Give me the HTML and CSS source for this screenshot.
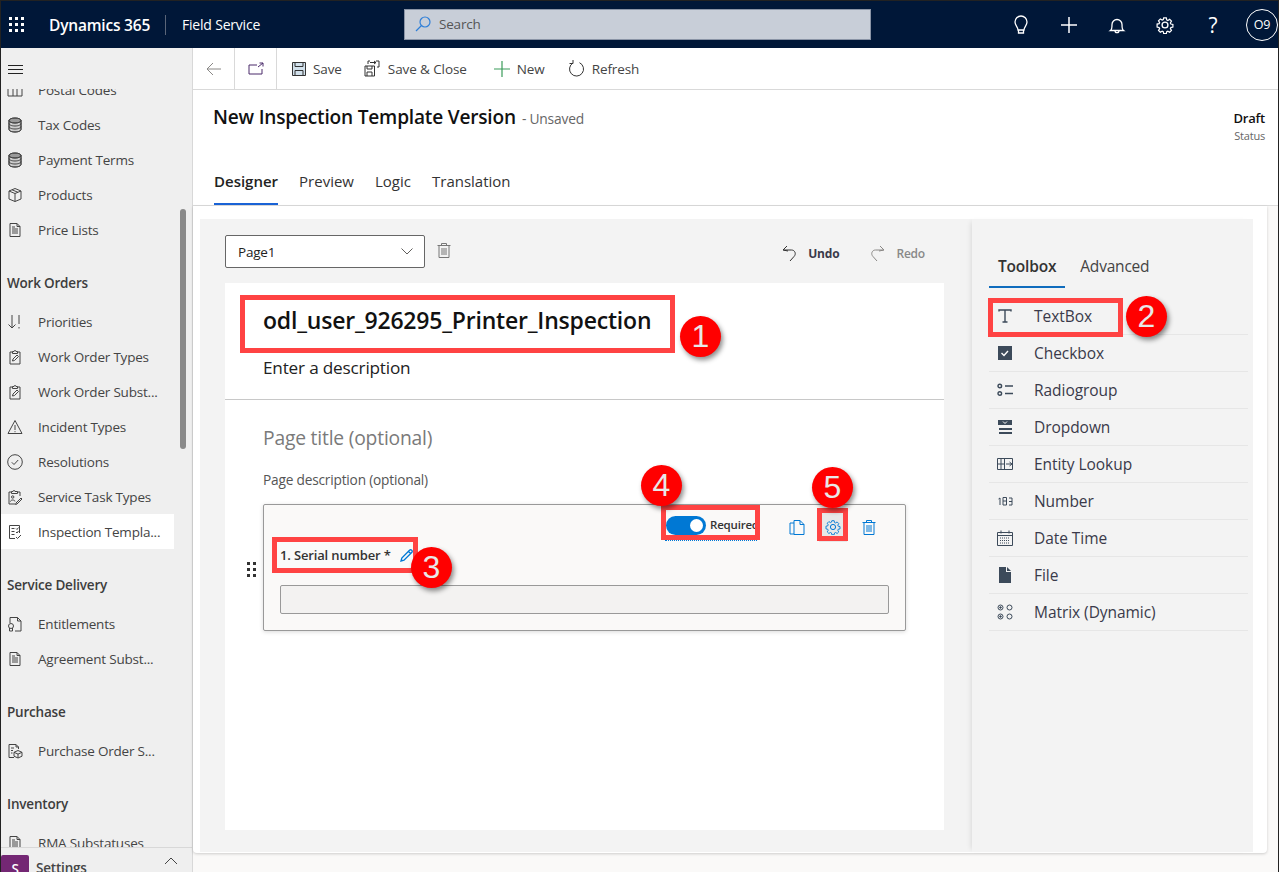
FILE: index.html
```html
<!DOCTYPE html>
<html lang="en">

<head>
    <meta charset="UTF-8">
    <meta name="viewport" content="width=device-width, initial-scale=1.0">
    <title>New Inspection Template Version</title>
    <link rel="stylesheet" href="styles.css">
</head>

<body>
    <svg class="defs" width="0" height="0">
        <symbol id="i-db" viewBox="0 0 16 16"><path d="M2 3.500v9c0 1.400 2.700 2.500 6 2.500s6-1.100 6-2.500v-9z" fill="#ccc"/><ellipse cx="8" cy="3.500" rx="6" ry="2.500" fill="#999"/><path d="M2 3.500v9c0 1.400 2.700 2.500 6 2.500s6-1.100 6-2.500v-9M2 6.500c0 1.400 2.700 2.500 6 2.500s6-1.100 6-2.500M2 9.500c0 1.400 2.700 2.500 6 2.500s6-1.100 6-2.500"/><ellipse cx="8" cy="3.500" rx="6" ry="2.500"/></symbol>
        <symbol id="i-box" viewBox="0 0 16 16"><path d="M8 1.500l6 2.500v8l-6 2.500L2 12V4zM2 4l6 2.500L14 4M8 6.500v8M5 2.800l6 2.500"/></symbol>
        <symbol id="i-doc" viewBox="0 0 16 16"><path d="M3 1.500h7l3 3v10H3zM10 1.500v3h3M5 7h6M5 9h6M5 11h6M5 5h3"/></symbol>
        <symbol id="i-sort" viewBox="0 0 16 16"><path d="M5 1v13M1.500 10.500L5 14l3.500-3.500M12 1v9M12 13v1.500"/></symbol>
        <symbol id="i-clip" viewBox="0 0 16 16"><path d="M5.500 3H3v12h10V3h-2.500M5.500 4.500V2.500h1.500a1 1 0 0 1 2 0h1.500v2zM5.500 12l.5-2 4-4 1.500 1.500-4 4z"/></symbol>
        <symbol id="i-warn" viewBox="0 0 16 16"><path d="M8 1.500L15 14.500H1zM8 6v5M8 12.200v1"/></symbol>
        <symbol id="i-check" viewBox="0 0 16 16"><circle cx="8" cy="8" r="7.300"/><path d="M4.800 8.300l2.200 2.200 4.200-4.500"/></symbol>
        <symbol id="i-task" viewBox="0 0 16 16"><path d="M4.500 3H2v12h6M10.500 3H13v4M4.500 4.500V2.500H6a1 1 0 0 1 2 0h2.500v2zM4.500 8a1.200 1.200 0 1 0 2.400 0a1.200 1.200 0 1 0-2.400 0M3.500 12.500c0-2 4.500-2 4.500 0M9 14l5-5 1 1-5 5-1.500.5z"/></symbol>
        <symbol id="i-insp" viewBox="0 0 16 16"><path d="M12.500 9V1.500h-10v13H8M4.500 4.500h3M4.500 7.500h3M4.500 10.500h3M9 4.500l1 1 1.500-2M9 8l1 1 1.500-2M9 13l1.500 1.500 3.500-3.500"/></symbol>
        <symbol id="i-cert" viewBox="0 0 16 16"><path d="M3 7V1.500h7.500l3.500 3.500v10H8M10.500 1.500V5H14"/><circle cx="4" cy="10" r="2.500"/><path d="M2.500 12v3h3v-3"/></symbol>
        <symbol id="i-order" viewBox="0 0 16 16"><path d="M7 14.500H2v-13h7l2.500 2.500v2M9 1.500V4h2.500M4 5h3M4 7.500h2M4 10h1.500M11 7.500l4 1.800v3.900l-4 1.800-4-1.800V9.300zM7 9.300l4 1.800 4-1.800M11 11v3.900"/></symbol>
        <symbol id="i-trash" viewBox="0 0 16 16"><path d="M1.500 3.500h13M5.500 3.500v-2h5v2M3 3.500v12h10v-12M6 6v7M8 6v7M10 6v7"/></symbol>
        <symbol id="i-gear" viewBox="0 0 16 16"><path d="M6.700 1h2.600l.4 2 1.100.5 1.800-1.100 1.800 1.800-1.100 1.800.5 1.100 2 .4v2.600l-2 .4-.5 1.100 1.100 1.800-1.800 1.800-1.800-1.100-1.100.5-.4 2H6.700l-.4-2-1.100-.5-1.800 1.100-1.800-1.800 1.100-1.800-.5-1.100-2-.4V7.100l2-.4.5-1.100-1.100-1.800 1.800-1.800 1.800 1.100 1.100-.5z" transform="translate(.8 .8) scale(.9)"/><circle cx="8" cy="8" r="2.600"/></symbol>
    </svg>

    <header class="topbar">
        <svg class="waffle" width="15" height="15" viewBox="0 0 15 15" fill="#fff"><rect width="3" height="3"/><rect x="6" width="3" height="3"/><rect x="12" width="3" height="3"/><rect y="6" width="3" height="3"/><rect x="6" y="6" width="3" height="3"/><rect x="12" y="6" width="3" height="3"/><rect y="12" width="3" height="3"/><rect x="6" y="12" width="3" height="3"/><rect x="12" y="12" width="3" height="3"/></svg>
        <span class="brand">Dynamics 365</span>
        <span class="app-name">Field Service</span>
        <div class="search">
            <svg width="16" height="16" viewBox="0 0 16 16" fill="none" stroke="#2f7fd8" stroke-width="1.200"><circle cx="10" cy="6" r="5"/><path d="M6.500 9.500L1 15"/></svg>
            <span>Search</span>
        </div>
        <div class="top-icons">
            <svg width="18" height="20" viewBox="0 0 18 20" fill="none" stroke="#fff" stroke-width="1.300"><path d="M6 15c0-3-3-4.500-3-8a6 6 0 0 1 12 0c0 3.500-3 5-3 8zM6.500 15v3h5v-3"/></svg>
            <svg width="18" height="18" viewBox="0 0 18 18" stroke="#fff" stroke-width="1.500"><path d="M9 1v16M1 9h16"/></svg>
            <svg width="18" height="18" viewBox="0 0 18 18" fill="none" stroke="#fff" stroke-width="1.300"><path d="M2.500 14.500c1.500-1 1.500-2.500 1.500-6a5 5 0 0 1 10 0c0 3.500 0 5 1.500 6zM7 14.500a2 2.200 0 0 0 4 0"/></svg>
            <svg class="gear-top" width="18" height="18"><use href="#i-gear"/></svg>
            <span class="help">?</span>
            <span class="avatar">O9</span>
        </div>
    </header>

    <div class="shell">
        <nav class="sidebar">
            <div class="burger"><span></span><span></span><span></span></div>
            <div class="nav-scroll">
                <div class="nav-inner">
                    <div class="nav-item"><svg width="16" height="16" viewBox="0 0 16 16"><path d="M1 1v13h14V1M6 1v13M10 1v13"/></svg>Postal Codes</div>
                    <div class="nav-item"><svg width="16" height="16"><use href="#i-db"/></svg>Tax Codes</div>
                    <div class="nav-item"><svg width="16" height="16"><use href="#i-db"/></svg>Payment Terms</div>
                    <div class="nav-item"><svg width="16" height="16"><use href="#i-box"/></svg>Products</div>
                    <div class="nav-item"><svg width="16" height="16"><use href="#i-doc"/></svg>Price Lists</div>

                    <div class="nav-head">Work Orders</div>
                    <div class="nav-item"><svg width="16" height="16"><use href="#i-sort"/></svg>Priorities</div>
                    <div class="nav-item"><svg width="16" height="16"><use href="#i-clip"/></svg>Work Order Types</div>
                    <div class="nav-item"><svg width="16" height="16"><use href="#i-clip"/></svg>Work Order Subst...</div>
                    <div class="nav-item"><svg width="16" height="16"><use href="#i-warn"/></svg>Incident Types</div>
                    <div class="nav-item"><svg width="16" height="16"><use href="#i-check"/></svg>Resolutions</div>
                    <div class="nav-item"><svg width="16" height="16"><use href="#i-task"/></svg>Service Task Types</div>
                    <div class="nav-item active"><svg width="16" height="16"><use href="#i-insp"/></svg>Inspection Templa...</div>

                    <div class="nav-head">Service Delivery</div>
                    <div class="nav-item"><svg width="16" height="16"><use href="#i-cert"/></svg>Entitlements</div>
                    <div class="nav-item"><svg width="16" height="16"><use href="#i-doc"/></svg>Agreement Subst...</div>

                    <div class="nav-head">Purchase</div>
                    <div class="nav-item"><svg width="16" height="16"><use href="#i-order"/></svg>Purchase Order S...</div>

                    <div class="nav-head">Inventory</div>
                    <div class="nav-item"><svg width="16" height="16"><use href="#i-doc"/></svg>RMA Substatuses</div>
                </div>
                <div class="scroll-thumb"></div>
            </div>
            <div class="nav-foot">
                <span class="area-tile">S</span>
                <span class="area-name">Settings</span>
                <svg width="14" height="8" viewBox="0 0 14 8" fill="none" stroke="#444"><path d="M1 7l6-6 6 6"/></svg>
            </div>
        </nav>

        <main class="main">
            <div class="cmdbar">
                <div class="cmd-nav"><svg width="16" height="14" viewBox="0 0 16 14" fill="none" stroke="#8a8886"><path d="M15 7H1M7 1L1 7l6 6"/></svg></div>
                <div class="cmd-nav"><svg width="16" height="14" viewBox="0 0 16 14" fill="none" stroke="#4b2a6b"><path d="M9 3H1v9h13V7M10 5l5-4M11.500 1H15v3.500"/></svg></div>
                <div class="cmd cmd-save"><svg width="16" height="16" viewBox="0 0 16 16" fill="none" stroke="#333"><path d="M1.500 1.500h13v13h-13z" fill="#7fa8c9" fill-opacity=".35"/><path d="M4 1.500v4h8v-4M4 14.500V9.500h8v5"/></svg>Save</div>
                <div class="cmd"><svg width="17" height="17" viewBox="0 0 17 17" fill="none" stroke="#333"><path d="M1 6h9.500v10H1zM3 6v3h5V6M3 16v-4h5v4M6 1H4v3M12 1h3v6h-2M6 2.500h6M10 1l2 1.500L10 4" /></svg>Save &amp; Close</div>
                <div class="cmd cmd-new"><svg width="16" height="16" viewBox="0 0 16 16" stroke="#3b9c5a" stroke-width="1.200"><path d="M8 0v16M0 8h16"/></svg>New</div>
                <div class="cmd cmd-refresh"><svg width="17" height="17" viewBox="0 0 17 17" fill="none" stroke="#333"><path d="M5 3a7 7 0 1 0 6.500-.3M5 0v3.500H1.500"/></svg>Refresh</div>
            </div>

            <div class="record-head">
                <div class="record-title">
                    <h1>New Inspection Template Version</h1>
                    <span class="unsaved">- Unsaved</span>
                </div>
                <div class="record-status">
                    <strong>Draft</strong>
                    <span>Status</span>
                </div>
            </div>

            <div class="tabs">
                <span class="tab on">Designer</span>
                <span class="tab">Preview</span>
                <span class="tab">Logic</span>
                <span class="tab">Translation</span>
            </div>

            <div class="surface">
                <div class="canvas">
                    <section class="designer">
                        <div class="page-tools">
                            <div class="page-select">
                                <span>Page1</span>
                                <svg width="12" height="7" viewBox="0 0 12 7" fill="none" stroke="#605e5c"><path d="M.5.5L6 6 11.500.5"/></svg>
                            </div>
                            <svg class="page-trash" width="16" height="16"><use href="#i-trash"/></svg>
                            <div class="history">
                                <span class="undo"><svg width="16" height="17" viewBox="0 0 16 17" fill="none" stroke="#333"><path d="M5 1L1 5l5 1M1.500 5h8c3.500 0 5 4 2.500 6.500L8 16"/></svg>Undo</span>
                                <span class="redo"><svg width="16" height="17" viewBox="0 0 16 17" fill="none" stroke="#8a8886"><path d="M11 1l4 4-5 1M14.500 5h-8C3 5 1.500 9 4 11.500L8 16"/></svg>Redo</span>
                            </div>
                        </div>

                        <div class="sheet">
                            <div class="sheet-head">
                                <h2>odl_user_926295_Printer_Inspection</h2>
                                <p>Enter a description</p>
                            </div>
                            <div class="sheet-body">
                                <h3>Page title (optional)</h3>
                                <p>Page description (optional)</p>
                                <div class="question">
                                    <svg class="grip" width="10" height="16" viewBox="0 0 10 16" fill="#333"><rect width="3" height="3"/><rect x="6" width="3" height="3"/><rect y="6" width="3" height="3"/><rect x="6" y="6" width="3" height="3"/><rect y="12" width="3" height="3"/><rect x="6" y="12" width="3" height="3"/></svg>
                                    <div class="q-actions">
                                        <div class="toggle-wrap">
                                            <span class="toggle"></span>
                                            <span class="toggle-label">Required</span>
                                        </div>
                                        <svg class="q-copy" width="16" height="17" viewBox="0 0 16 17" fill="none" stroke="#0078d4"><path d="M5 4H1v11h4M5 1.500h6l4 4v10H5zM11 1.500v4h4"/></svg>
                                        <span class="q-gear"><svg width="16" height="16"><use href="#i-gear"/></svg></span>
                                        <svg class="q-trash" width="16" height="16"><use href="#i-trash"/></svg>
                                    </div>
                                    <div class="q-title">1. Serial number *
                                        <svg width="13" height="13" viewBox="0 0 13 13" fill="none" stroke="#0078d4" stroke-width="1.300"><path d="M1 12l.8-3L9.500 1.300a1.500 1.500 0 0 1 2.200 2.200L4 11.200zM8.500 2.500l2 2"/></svg>
                                    </div>
                                    <div class="q-input"></div>
                                </div>
                            </div>
                        </div>
                    </section>

                    <aside class="toolbox">
                        <div class="tool-tabs">
                            <span class="tool-tab on">Toolbox</span>
                            <span class="tool-tab">Advanced</span>
                        </div>
                        <ul class="tool-list">
                            <li><svg width="16" height="16" viewBox="0 0 16 16" fill="none" stroke="#3c4a5a" stroke-width="1.400"><path d="M2 3.500V2h12v1.500M8 2v12M5.500 14h5"/></svg>TextBox</li>
                            <li><svg width="16" height="16" viewBox="0 0 16 16"><rect x="1" y="1" width="14" height="14" fill="#3c4a5a"/><path d="M4.500 8l2.500 2.500 4-4.500" fill="none" stroke="#fff" stroke-width="1.400"/></svg>Checkbox</li>
                            <li><svg width="16" height="16" viewBox="0 0 16 16" fill="none" stroke="#3c4a5a" stroke-width="1.400"><circle cx="2.800" cy="4" r="1.800"/><circle cx="2.800" cy="11.500" r="1.800"/><path d="M8 4h8M8 11.500h8"/></svg>Radiogroup</li>
                            <li><svg width="16" height="16" viewBox="0 0 16 16" fill="#3c4a5a"><path d="M1 1h14v5H1z"/><path d="M2 9h13v2H2zM2 13h13v2H2z"/><path d="M6 2.500l2 2 2-2" fill="none" stroke="#fff"/></svg>Dropdown</li>
                            <li><svg width="16" height="16" viewBox="0 0 16 16" fill="none" stroke="#3c4a5a"><path d="M.5 2.500h15v11H.5zM.5 8h7M7.500 2.500v11M4 2.500v11M9 8h6M12.500 6l2.500 2-2.500 2"/></svg>Entity Lookup</li>
                            <li><svg width="16" height="16" viewBox="0 0 16 16" fill="none" stroke="#3c4a5a"><path d="M1.500 6l1.500-1v7M6 4.500h3.500v7.500H6zM6 8h3M12 5h3v7h-3M12 8.500h3"/></svg>Number</li>
                            <li><svg width="16" height="16" viewBox="0 0 16 16" fill="none" stroke="#3c4a5a"><path d="M.5 2.500h15v13H.5zM.5 5.500h15M4 .5v3M12 .5v3"/><path d="M3 8h10M3 10.500h10M3 13h10" stroke-dasharray="1 1"/></svg>Date Time</li>
                            <li><svg width="16" height="16" viewBox="0 0 16 16" fill="#3c4a5a"><path d="M2 0h7v5h5v11H2zM10 0l4 4h-4z"/></svg>File</li>
                            <li><svg width="16" height="16" viewBox="0 0 16 16" fill="none" stroke="#3c4a5a"><circle cx="3.500" cy="3.500" r="2.500"/><circle cx="12.500" cy="3.500" r="2.500"/><circle cx="3.500" cy="12.500" r="2.500"/><circle cx="12.500" cy="12.500" r="2.500"/><circle cx="3.500" cy="3.500" r=".8" fill="#3c4a5a"/><circle cx="3.500" cy="12.500" r=".8" fill="#3c4a5a"/></svg>Matrix (Dynamic)</li>
                        </ul>
                    </aside>
                </div>
            </div>
        </main>
    </div>

    <div class="mark mark-1"></div>
    <div class="mark mark-2"></div>
    <div class="mark mark-3"></div>
    <div class="mark mark-4"></div>
    <div class="mark mark-5"></div>
    <div class="pin pin-1">1</div>
    <div class="pin pin-2">2</div>
    <div class="pin pin-3">3</div>
    <div class="pin pin-4">4</div>
    <div class="pin pin-5">5</div>
</body>

</html>
```

FILE: styles.css
```css
* {
    box-sizing: border-box;
}

html,
body {
    height: 100%;
}

body {
    margin: 0;
    overflow: hidden;
    position: relative;
    font-family: "Open Sans", "Noto Sans", Arial, sans-serif;
    font-size: 13.500px;
    letter-spacing: -0.2px;
    color: #333;
    background: #fff;
    border: 1px solid #222;
    border-bottom: 0;
}

.defs {
    position: absolute;
}

svg {
    flex: none;
}

/* top bar */
.topbar {
    height: 47px;
    background: #001738;
    color: #fff;
    display: flex;
    align-items: center;
    padding-left: 8px;
}

.waffle {
    margin-right: 25px;
}

.brand {
    font-size: 15.500px;
    font-weight: 600;
    width: 117px;
    border-right: 1px solid #5a6578;
    line-height: 20px;
}

.app-name {
    margin-left: 16px;
    width: 222px;
    font-size: 14px;
}

.search {
    width: 467px;
    height: 31px;
    margin-top: -1px;
    background: #c8ced8;
    border: 1px solid #8a94a6;
    display: flex;
    align-items: center;
    gap: 8px;
    padding-left: 10px;
    color: #555;
}

.top-icons {
    margin-left: auto;
    display: flex;
    align-items: center;
    gap: 30px;
}

.gear-top {
    fill: none;
    stroke: #fff;
    stroke-width: 1.200;
}

.help {
    font-size: 21px;
    font-weight: 400;
    width: 18px;
    text-align: center;
    color: #fff;
}

.avatar {
    width: 32px;
    height: 32px;
    border: 1px solid #fff;
    border-radius: 50%;
    margin-left: -6px;
    display: flex;
    align-items: center;
    justify-content: center;
    font-size: 12.500px;
    font-weight: 500;
}

.shell {
    display: flex;
    height: 824px;
}

/* sidebar */
.sidebar {
    width: 192px;
    flex: none;
    background: #efefef;
    border-right: 1px solid #d8d8d8;
    display: flex;
    flex-direction: column;
    color: #444;
}

.burger {
    height: 41px;
    flex: none;
    padding: 17px 0 0 7px;
}

.burger span {
    display: block;
    width: 15px;
    height: 1px;
    background: #222;
    margin-bottom: 3px;
}

.nav-scroll {
    flex: 1;
    overflow: hidden;
    position: relative;
}

.nav-inner {
    margin-top: -17px;
}

.nav-item {
    height: 35px;
    width: 173px;
    padding-left: 6px;
    display: flex;
    align-items: center;
    gap: 15px;
    white-space: nowrap;
}

.nav-item svg {
    fill: none;
    stroke: #444;
    stroke-width: 1;
}

.nav-item.active {
    background: #fff;
}

.nav-head {
    height: 27px;
    margin: 23px 0 7px;
    padding-left: 6px;
    line-height: 27px;
    font-weight: 600;
    color: #3d3d3d;
}

.scroll-thumb {
    position: absolute;
    left: 179px;
    top: 120px;
    width: 6px;
    height: 240px;
    border-radius: 3px;
    background: #8a8a8a;
}

.nav-foot {
    height: 25px;
    flex: none;
    border-top: 1px solid #d8d8d8;
    padding: 7px 14px 0 0;
    display: flex;
    align-items: flex-start;
    overflow: hidden;
}

.area-tile {
    width: 28px;
    height: 28px;
    background: #742774;
    color: #fff;
    border-radius: 2px;
    font-weight: 600;
    text-align: center;
    line-height: 28px;
    flex: none;
}

.area-name {
    margin: 4px auto 0 7px;
    font-weight: 600;
}

.nav-foot svg {
    margin-top: 2px;
}

/* main */
.main {
    flex: 1;
    display: flex;
    flex-direction: column;
    min-width: 0;
    background: #faf9f8;
}

.cmdbar {
    height: 42px;
    flex: none;
    background: #fff;
    border-bottom: 1px solid #d9d9d9;
    display: flex;
    align-items: stretch;
    color: #444;
    letter-spacing: -0.1px;
}

.cmd-nav {
    width: 42px;
    border-right: 1px solid #d9d9d9;
    display: flex;
    align-items: center;
    justify-content: center;
}

.cmd {
    display: flex;
    align-items: center;
    gap: 7px;
    padding-left: 14px;
    padding-right: 9px;
}

.cmd-save {
    padding-right: 8px;
    gap: 6px;
}

.cmd-new {
    padding-left: 18px;
}

.cmd-refresh {
    padding-left: 14px;
}

.record-head {
    background: #fff;
    height: 70px;
    flex: none;
    display: flex;
    justify-content: space-between;
    padding: 14px 13px 0 20px;
}

.record-title {
    display: flex;
    align-items: baseline;
    gap: 6px;
}

.record-title h1 {
    margin: 0;
    font-size: 19.100px;
    font-weight: 600;
    color: #111;
    line-height: 26px;
}

.unsaved {
    color: #666;
    font-size: 13.800px;
}

.record-status {
    display: flex;
    flex-direction: column;
    align-items: flex-end;
    padding-top: 5px;
}

.record-status strong {
    font-weight: 600;
    color: #111;
    line-height: 18px;
    font-size: 13px;
}

.record-status span {
    font-size: 11px;
    line-height: 18px;
    color: #666;
}

.tabs {
    height: 46px;
    flex: none;
    background: #fff;
    border-bottom: 1px solid #dcdcdc;
    display: flex;
    gap: 21px;
    padding-left: 21px;
    font-size: 15px;
    letter-spacing: 0;
}

.tab {
    height: 45px;
    line-height: 43px;
    color: #333;
}

.tab.on {
    font-weight: 600;
    color: #222;
    border-bottom: 2px solid #1a63d6;
}

.surface {
    flex: 1;
    background: #fff;
    margin: 0 11px 19px 0;
    padding: 13px 14px 0 7px;
    box-shadow: 0 1px 3px rgba(0, 0, 0, 0.18);
    border-radius: 0 0 4px 4px;
}

.canvas {
    height: 633px;
    background: #f3f3f3;
    display: flex;
}

/* designer side */
.designer {
    width: 744px;
    padding: 16px 0 0 25px;
    flex: none;
}

.page-tools {
    display: flex;
    align-items: center;
    height: 33px;
    padding-right: 19px;
}

.page-select {
    width: 200px;
    height: 33px;
    background: #fff;
    border: 1px solid #666;
    border-radius: 2px;
    display: flex;
    align-items: center;
    justify-content: space-between;
    padding: 0 11px 0 12px;
    color: #222;
}

.page-trash {
    margin-left: 11px;
    margin-top: -4px;
    fill: none;
    stroke: #777;
}

.history {
    margin-left: auto;
    display: flex;
    gap: 30px;
    font-size: 12px;
    padding-top: 3px;
}

.history span {
    display: flex;
    align-items: center;
    gap: 11px;
}

.history .undo {
    font-weight: 700;
    color: #3a3a4a;
    gap: 10px;
}

.history .redo {
    font-weight: 600;
    color: #888;
}

.sheet {
    height: 547px;
    width: 719px;
    margin-top: 15px;
    background: #fff;
}

.sheet-head {
    height: 117px;
    padding: 20px 0 0 38px;
    border-bottom: 1px solid #c8c8c8;
}

.sheet-head h2 {
    margin: 0;
    font-size: 23px;
    font-weight: 600;
    color: #111;
    line-height: 34px;
}

.sheet-head p {
    margin: 19px 0 0;
    font-size: 17.200px;
    line-height: 24px;
    color: #222;
}

.sheet-body {
    padding: 25px 38px 0;
}

.sheet-body h3 {
    margin: 0;
    font-size: 19.300px;
    font-weight: 400;
    line-height: 26px;
    color: #7a7a7a;
}

.sheet-body p {
    margin: 19px 0 0;
    font-size: 13.700px;
    line-height: 20px;
    color: #555;
}

.question {
    position: relative;
    width: 643px;
    height: 127px;
    margin-top: 14px;
    background: #faf9f8;
    border: 1px solid #999;
    border-radius: 2px;
    box-shadow: 0 1px 4px rgba(0, 0, 0, 0.15);
    padding: 11px 16px 0;
}

.grip {
    position: absolute;
    left: -17px;
    top: 57px;
}

.q-actions {
    display: flex;
    align-items: center;
    height: 22px;
    padding-left: 385px;
}

.toggle-wrap {
    width: 92px;
    height: 25px;
    display: flex;
    align-items: flex-start;
    gap: 4px;
    border-left: 1px dotted #0078d4;
    border-bottom: 1px dotted #0078d4;
    margin-top: 3px;
    overflow: hidden;
}

.toggle {
    width: 40px;
    height: 19px;
    border-radius: 10px;
    background: #0078d4;
    position: relative;
    flex: none;
}

.toggle::after {
    content: "";
    position: absolute;
    right: 3px;
    top: 3px;
    width: 13px;
    height: 13px;
    border-radius: 50%;
    background: #fff;
}

.toggle-label {
    font-size: 11.500px;
    font-weight: 600;
    line-height: 18px;
    width: 47px;
    overflow: hidden;
    color: #333;
    white-space: nowrap;
}

.q-copy {
    margin-left: 32px;
}

.q-gear {
    width: 28px;
    height: 29px;
    background: #e8e8e8;
    display: flex;
    align-items: center;
    justify-content: center;
    margin-left: 14px;
}

.q-gear svg,
.q-trash {
    fill: none;
    stroke: #0078d4;
}

.q-trash {
    margin-left: 14px;
}

.q-title {
    margin-top: 8px;
    font-size: 13px;
    font-weight: 600;
    letter-spacing: -0.15px;
    line-height: 18px;
    display: flex;
    align-items: center;
    gap: 9px;
}

.q-input {
    height: 29px;
    margin-top: 21px;
    background: #f3f2f1;
    border: 1px solid #999;
    border-radius: 2px;
}

/* toolbox */
.toolbox {
    margin-left: 28px;
    width: 281px;
    padding: 32px 5px 0 17px;
    box-shadow: -4px 0 5px -3px rgba(0, 0, 0, 0.1);
}

.tool-tabs {
    display: flex;
    height: 37px;
    font-size: 15.500px;
}

.tool-tab {
    line-height: 30px;
    padding: 0 9px;
    margin-right: 6px;
    color: #444;
}

.tool-tab.on {
    font-weight: 600;
    color: #333;
    border-bottom: 2px solid #0f6cbd;
}

.tool-list {
    list-style: none;
    margin: 10px 0 0;
    padding: 0;
    font-size: 15.500px;
    letter-spacing: -0.05px;
    color: #3a3a4a;
}

.tool-list li {
    height: 37px;
    display: flex;
    align-items: center;
    gap: 21px;
    padding-left: 8px;
    border-bottom: 1px solid #e6e6e6;
}

/* callouts laid over the screenshot */
.mark {
    position: absolute;
    border: 5px solid #ff4343;
}

.mark-1 {
    left: 239px;
    top: 294px;
    width: 435px;
    height: 58px;
}

.mark-2 {
    left: 987px;
    top: 297px;
    width: 135px;
    height: 39px;
}

.mark-3 {
    left: 271px;
    top: 536px;
    width: 146px;
    height: 36px;
}

.mark-4 {
    left: 660px;
    top: 504px;
    width: 99px;
    height: 35px;
}

.mark-5 {
    left: 816px;
    top: 507px;
    width: 31px;
    height: 33px;
}

.pin {
    position: absolute;
    width: 41px;
    height: 41px;
    border-radius: 50%;
    background: #f00;
    color: #e8e8e8;
    font-family: "Liberation Sans", Arial, sans-serif;
    font-size: 32px;
    letter-spacing: 0;
    line-height: 41px;
    text-align: center;
    box-shadow: 2px 3px 5px rgba(0, 0, 0, 0.45);
}

.pin-1 {
    left: 679px;
    top: 315px;
}

.pin-2 {
    left: 1125px;
    top: 295px;
}

.pin-3 {
    left: 410px;
    top: 546px;
}

.pin-4 {
    left: 640px;
    top: 464px;
}

.pin-5 {
    left: 811px;
    top: 466px;
}
```
